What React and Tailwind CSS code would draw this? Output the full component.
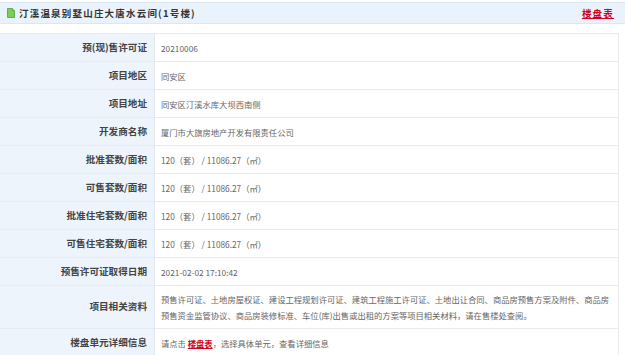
import React from "react";

const area = "120（套） / 11086.27（㎡）";

const rows = [
  ["预(现)售许可证", "20210006"],
  ["项目地区", "同安区"],
  ["项目地址", "同安区汀溪水库大坝西南侧"],
  ["开发商名称", "厦门市大旗房地产开发有限责任公司"],
  ["批准套数/面积", area],
  ["可售套数/面积", area],
  ["批准住宅套数/面积", area],
  ["可售住宅套数/面积", area],
  ["预售许可证取得日期", "2021-02-02 17:10:42"],
];

function DocIcon() {
  return (
    <svg width="8" height="10" viewBox="0 0 9 11">
      <path d="M0.5 0.5 H6 L8.5 3 V10.5 H0.5 Z" fill="#7ccf5a" stroke="#4fa63a" strokeWidth="1" />
      <path d="M6 0.5 V3 H8.5" fill="#c8f0b4" stroke="#4fa63a" strokeWidth="1" />
    </svg>
  );
}

function Row({ label, children, tall }) {
  return (
    <div className="flex border-t border-[#e9ecef]">
      <div
        className={`w-[155px] shrink-0 bg-[#eef4fb] border-r border-[#e3e9f0] flex items-center justify-end pr-[7px] text-[9.6px] font-bold text-[#444] leading-none ${tall ? "h-[42px]" : "h-[27px]"}`}
      >
        {label}
      </div>
      <div className="flex-1 flex items-center pl-[6px] pr-[4px] text-[8.3px] text-[#666] leading-[16px]">
        {children}
      </div>
    </div>
  );
}

export default function App() {
  return (
    <div
      className="w-[625px] h-[355px] overflow-hidden bg-white"
      style={{ fontFamily: '"Noto Sans CJK SC", "Liberation Sans", sans-serif' }}
    >
      <div className="mt-[2px] h-[22px] bg-[#eaf3fb] border-y border-[#dbe7f3] flex items-center px-[7px]">
        <DocIcon />
        <span className="ml-[4px] text-[9.5px] font-bold text-[#333] tracking-[1.2px]">
          汀溪温泉别墅山庄大唐水云间(1号楼)
        </span>
        <a className="ml-auto mr-[4px] text-[9.5px] font-bold text-[#d0021b] underline tracking-[1.2px]">
          楼盘表
        </a>
      </div>

      <div className="mt-[9px] mr-[6px] border-r border-[#e9ecef]">
        {rows.map(([l, v]) => (
          <Row key={l} label={l}>
            {v}
          </Row>
        ))}
        <Row label="项目相关资料" tall>
          <span>
            预售许可证、土地房屋权证、建设工程规划许可证、建筑工程施工许可证、土地出让合同、商品房预售方案及附件、商品房预售资金监管协议、商品房装修标准、车位(库)出售或出租的方案等项目相关材料，请在售楼处查阅。
          </span>
        </Row>
        <Row label="楼盘单元详细信息">
          <span>
            请点击{" "}
            <a className="text-[#d0021b] font-bold underline">楼盘表</a>
            ，选择具体单元，查看详细信息
          </span>
        </Row>
      </div>
    </div>
  );
}
